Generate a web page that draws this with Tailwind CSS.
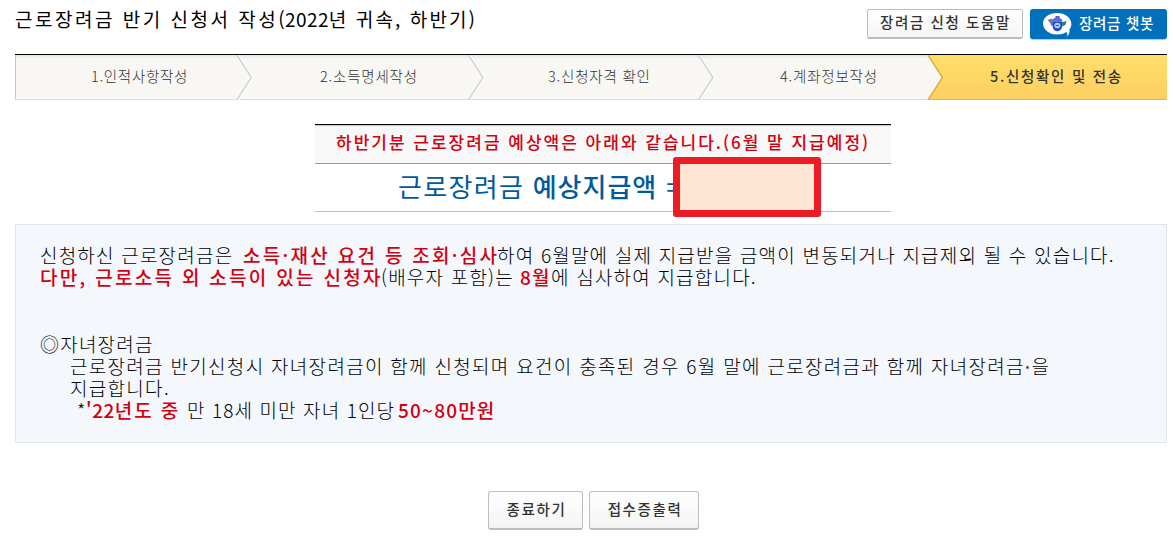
<!DOCTYPE html>
<html lang="ko">
<head>
<meta charset="utf-8">
<title>근로장려금 반기 신청서 작성</title>
<script src="https://cdn.jsdelivr.net/npm/@tailwindcss/browser@4"></script>
</head>
<body class="w-[1173px] h-[550px] overflow-hidden bg-white font-['Noto_Sans_CJK_KR',sans-serif] text-black whitespace-nowrap">
<header class="flex h-[54px] pl-[15px] pr-[6px]">
  <h1 class="flex-1 pt-[7px] text-[19px] leading-[24px] tracking-[2.5px]">근로장려금 반기 신청서 작성<span class="tracking-[.4px]">(2022</span><span class="tracking-[2.1px]">년 귀속, 하반기)</span></h1>
  <div class="flex gap-[7px] pt-[9px]">
    <button class="w-[156px] h-[30px] rounded-[2px] border border-[#bdbdbd] border-b-2 bg-linear-to-b from-white to-[#f5f5f5] text-[14.5px] leading-[24px] font-medium tracking-[1.6px] text-[#333] pl-[1px] pb-[3px]">장려금 신청 도움말</button>
    <button class="flex w-[137px] h-[30px] rounded-[3px] bg-[#0070bd] shadow-[0_1px_1px_#b5c5d0] pl-[13px] text-white">
      <svg class="mt-[3px] shrink-0" width="29" height="25" viewBox="0 0 29 25">
        <path d="M14 1C6 1 0 5.500 0 11.500S6 22.500 14 22.500C18 22.500 21 21.700 23.500 20C24.500 21.500 24.500 23 23.500 24.500C26 23 27 20.500 26.300 17.500C28 15.800 28.500 13.500 28.300 11.500C28 5.500 22 1 14 1Z" fill="#fff"/>
        <path d="M4.500 8L9 6.500L11 10L8 12Z" fill="#7776ad"/>
        <path d="M7 11.500L10 10.500L10.500 13.500L8.500 14Z" fill="#4f9b93"/>
        <path d="M17.500 10.500L23.500 9L22.500 13L18.500 14.500Z" fill="#278a62"/>
        <path d="M9 8.500Q10 5.500 14.500 5.500Q18.500 5.500 19.500 9L18 10.500H10.500Z" fill="#5a74d0"/>
        <path d="M12.500 4H16.500V6.500H12.500Z" fill="#5a5ec4"/>
        <path d="M9.800 10H18.800Q20 12 19 15.500Q17.500 19.300 14.300 19.300Q11 19.300 9.800 15.500Q9 12 9.800 10Z" fill="#2948df"/>
        <ellipse cx="14.300" cy="13.500" rx="3" ry="2.800" fill="#a9d4ff"/>
        <path d="M12.800 13.500H15.800" stroke="#3045bd"/>
      </svg>
      <span class="ml-[7px] pt-[2px] text-[14.5px] leading-[24px] font-medium tracking-[.7px]">장려금 챗봇</span>
    </button>
  </div>
</header>

<nav class="relative ml-[15px] w-[1152px] h-[46px] border-t border-black">
  <svg class="absolute inset-0" width="1152" height="45" viewBox="0 0 1152 45" fill="none">
    <defs>
      <linearGradient id="gold" x1="0" y1="0" x2="0" y2="1"><stop offset="0" stop-color="#ffdf6b"/><stop offset="1" stop-color="#fbcf61"/></linearGradient>
      <linearGradient id="shade" x1="0" y1="0" x2="0" y2="1"><stop offset="0" stop-color="#e6e5e1"/><stop offset="1" stop-color="#f8f7f3"/></linearGradient>
    </defs>
    <rect width="1152" height="45" fill="#f8f7f3"/>
    <rect width="1152" height="4" fill="url(#shade)"/>
    <path d="M.5 0V45" stroke="#c9c9c9"/>
    <path d="M0 44.500H914" stroke="#dedede"/>
    <g stroke="#fff" stroke-width="1.500"><path d="M223.500 0L238 22.500L223.500 45M454.500 0L469.300 22.500L454.500 45M684.500 0L699.300 22.500L684.500 45"/></g>
    <g stroke="#d4d4d3" stroke-width="1.500"><path d="M222 0L236.500 22.500L222 45M453.500 0L468 22.500L453.500 45M683.500 0L698 22.500L683.500 45"/></g>
    <path d="M913 0H1152V45H913L927.500 22.500Z" fill="url(#gold)"/>
    <path d="M913 0L927.500 22.500L913 45" stroke="#e0ae44" stroke-width="1.500"/>
    <path d="M913 44.500H1152" stroke="#e5b452"/>
  </svg>
  <ol class="relative flex text-[14.5px] leading-[20px] font-light text-[#333] pt-[11px]">
    <li class="w-[229px] pl-[76px] tracking-[.7px]">1.인적사항작성</li>
    <li class="w-[229px] pl-[76px] tracking-[.8px]">2.소득명세작성</li>
    <li class="w-[229px] pl-[75px] tracking-[.8px]">3.신청자격 확인</li>
    <li class="w-[229px] pl-[78px] tracking-[.8px]">4.계좌정보작성</li>
    <li class="w-[229px] pl-[59px] font-medium tracking-[1.7px]">5.신청확인 및 전송</li>
  </ol>
</nav>

<section class="relative mt-[24px] ml-[315px] w-[576px] h-[88px] border-t border-black border-b border-b-[#bdbdbd]">
  <p class="h-[39px] border-t border-t-[#c4c4c4] border-b border-b-[#999] bg-[#f8f8f8] pl-[21px] pt-[4px] text-[17px] leading-[24px] font-medium tracking-[2px] text-[#d3000f]">하반기분 근로장려금 예상액은 아래와 같습니다.(6월 말 지급예정)</p>
  <p class="pl-[83px] pt-[4px] text-[26px] leading-[36px] tracking-[1.3px] text-[#005a9e]">근로장려금 <span class="font-medium tracking-[1px]">예상지급액</span><span class="ml-[9px]">=</span></p>
  <div class="absolute left-[358px] top-[32px] w-[148px] h-[60px] rounded-[3px] border-[7px] border-[#ed1c24] bg-[#ffe5d3]"></div>
</section>

<main class="mt-[12px] ml-[15px] w-[1152px] h-[219px] border border-[#dfe5ed] bg-[#f4f7fc] pl-[24px] pt-[19px] text-[19px] leading-[22px] font-light">
  <p class="flex tracking-[1.2px]"><span class="w-[203px]">신청하신 근로장려금은</span><span class="w-[254px] font-medium tracking-[2.3px] text-[#d3000f]">소득·재산 요건 등 조회·심사</span><span>하여 6월말에 실제 지급받을 금액이 변동되거나 지급제외 될 수 있습니다.</span></p>
  <p class="flex tracking-[1.2px]"><span class="w-[341px] font-medium tracking-[2.3px] text-[#d3000f]">다만, 근로소득 외 소득이 있는 신청자</span><span class="w-[139px]">(배우자 포함)는</span><span class="w-[31px] font-medium text-[#d3000f]">8월</span><span>에 심사하여 지급합니다.</span></p>
  <p class="mt-[45px] tracking-[1.2px]">◎자녀장려금</p>
  <p class="h-[22px] pl-[30px] tracking-[1.3px]">근로장려금 반기신청시 자녀장려금이 함께 신청되며 요건이 충족된 경우 6월 말에 근로장려금과 함께 자녀장려금<span class="text-[12px] leading-none relative top-[1px]">*</span>을</p>
  <p class="pl-[30px] tracking-[1.3px]">지급합니다.</p>
  <p class="flex pl-[37px] tracking-[1.1px]"><span class="w-[9px]">*</span><span class="w-[101px] font-medium tracking-[1.9px] text-[#d3000f]"><span class="tracking-[.5px]">'22</span>년도 중</span><span class="w-[211px]">만 18세 미만 자녀 1인당</span><span class="font-medium text-[#d3000f] tracking-[1.2px]">50~80만원</span></p>
</main>

<footer class="flex gap-[6px] mt-[48px] ml-[488px] text-[14.5px] font-medium text-[#333] tracking-[1.6px]">
  <button class="w-[95px] h-[39px] rounded-[3px] border border-[#bdbdbd] border-b-2 bg-linear-to-b from-white to-[#f4f4f4] pl-[2px] pb-[2px]">종료하기</button>
  <button class="w-[110px] h-[39px] rounded-[3px] border border-[#bdbdbd] border-b-2 bg-linear-to-b from-white to-[#f4f4f4] pl-[2px] pb-[2px]">접수증출력</button>
</footer>
</body>
</html>
